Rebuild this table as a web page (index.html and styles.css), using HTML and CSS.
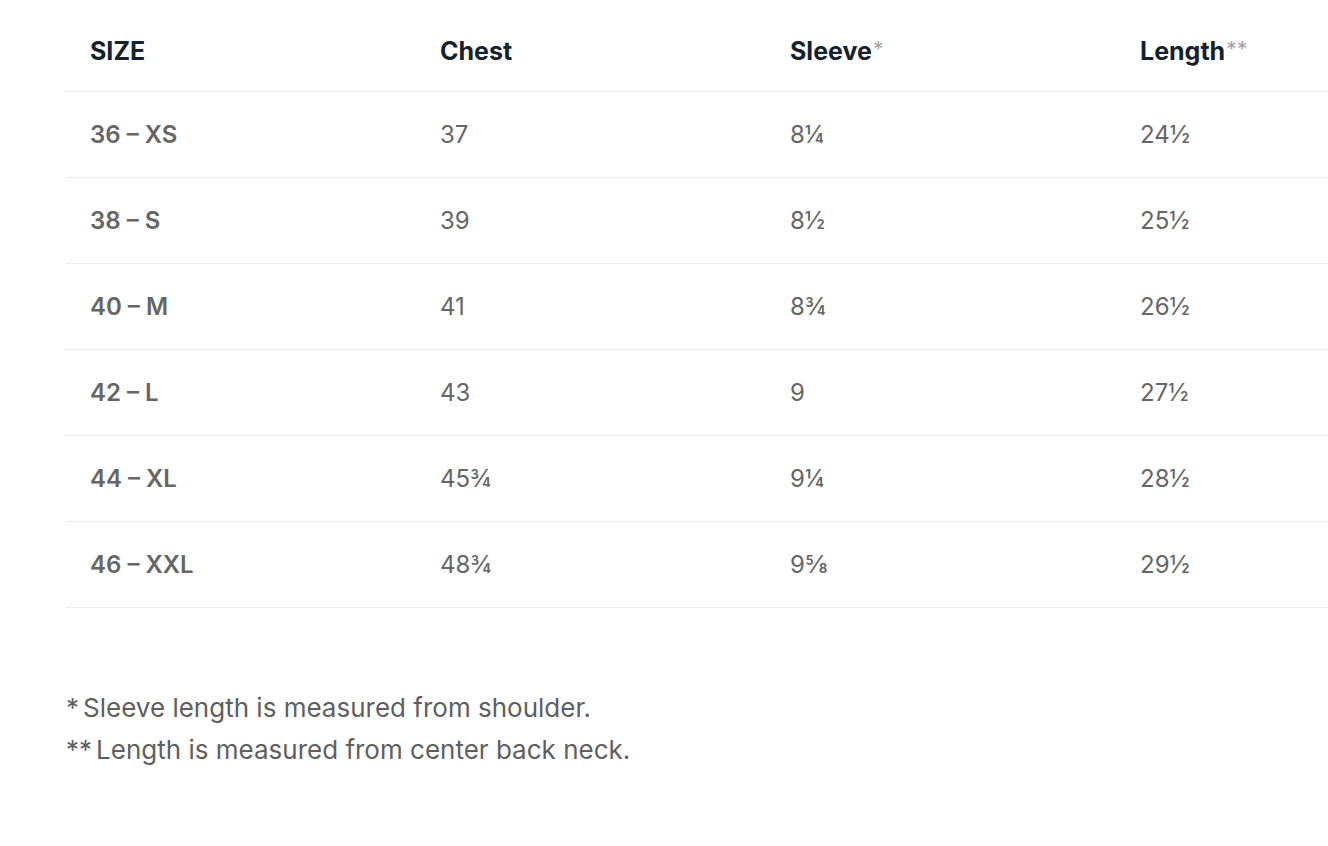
FILE: index.html
```html
<!DOCTYPE html>
<html>
<head>
<meta charset="utf-8">
<link rel="stylesheet" href="styles.css">
</head>
<body>
<div class="page">
  <table class="chart">
    <colgroup>
      <col class="c-wide">
      <col class="c-wide">
      <col class="c-wide">
      <col class="c-last">
    </colgroup>
    <thead>
      <tr>
        <th>SIZE</th>
        <th>Chest</th>
        <th>Sleeve<span class="ast">*</span></th>
        <th>Length<span class="ast">**</span></th>
      </tr>
    </thead>
    <tbody>
      <tr><td class="size">36 – XS</td><td>37</td><td>8¼</td><td>24½</td></tr>
      <tr><td class="size">38 – S</td><td>39</td><td>8½</td><td>25½</td></tr>
      <tr><td class="size">40 – M</td><td>41</td><td>8¾</td><td>26½</td></tr>
      <tr><td class="size">42 – L</td><td>43</td><td>9</td><td>27½</td></tr>
      <tr><td class="size">44 – XL</td><td>45¾</td><td>9¼</td><td>28½</td></tr>
      <tr><td class="size">46 – XXL</td><td>48¾</td><td>9⅝</td><td>29½</td></tr>
    </tbody>
  </table>
  <div class="notes">
    <p><span class="mark">*</span>Sleeve length is measured from shoulder.</p>
    <p><span class="mark">**</span>Length is measured from center back neck.</p>
  </div>
</div>
</body>
</html>
```

FILE: styles.css
```css
html, body {
  margin: 0;
  padding: 0;
  background: #ffffff;
  overflow: hidden;
}
body {
  width: 1328px;
  height: 846px;
  font-family: Inter, "Liberation Sans", sans-serif;
}
.page {
  padding: 9px 0 0 66px;
}
.chart {
  border-collapse: collapse;
  width: 1262px;
  table-layout: fixed;
}
.c-wide {
  width: 350px;
}
.c-last {
  width: 212px;
}
.chart th, .chart td {
  text-align: left;
  padding: 0 0 0 24px;
  font-size: 24px;
  white-space: nowrap;
}
.chart th {
  height: 80px;
  padding-top: 2px;
  font-size: 25px;
  color: #14212f;
  font-weight: 700;
  border-bottom: 1px solid #ececec;
  vertical-align: middle;
}
.chart .ast {
  color: #a3a3a3;
  font-weight: 400;
  font-size: 21px;
  vertical-align: 3px;
  margin-left: 1px;
}
.chart td {
  height: 85px;
  color: #666666;
  font-weight: 400;
  border-bottom: 1px solid #ececec;
}
.chart td.size {
  font-weight: 600;
}
.notes {
  margin-top: 79px;
}
.notes p {
  margin: 0;
  font-size: 26px;
  line-height: 42px;
  color: #5f5f5f;
}
.notes .mark {
  margin-right: 4px;
}
```
